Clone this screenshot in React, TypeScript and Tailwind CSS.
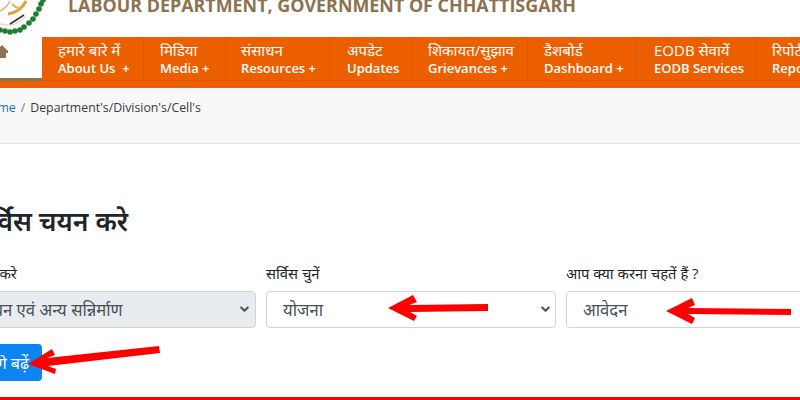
const font = { fontFamily: '"Open Sans","Noto Sans","Noto Sans Devanagari",sans-serif' };

const menu = [
  { hi: "हमारे बारे में", en: "About Us  +", w: "w-[102px]", pl: "pl-[16px]" },
  { hi: "मिडिया", en: "Media +", w: "w-[82px]", pl: "pl-[16px]" },
  { hi: "संसाधन", en: "Resources +", w: "w-[104px]", pl: "pl-[15px]" },
  { hi: "अपडेट", en: "Updates", w: "w-[82px]", pl: "pl-[17px]" },
  { hi: "शिकायत/सुझाव", en: "Grievances +", w: "w-[116px]", pl: "pl-[16px]" },
  { hi: "डैशबोर्ड", en: "Dashboard +", w: "w-[109px]", pl: "pl-[16px]" },
  { hi: "EODB सेवायें", en: "EODB Services", w: "w-[119px]", pl: "pl-[17px]" },
  { hi: "रिपोर्ट", en: "Reports +", w: "w-[100px]", pl: "pl-[16px]" },
];

const beads = [
  [0, 30], [5, 31], [10, 32], [15, 31], [20, 30], [24, 27], [29, 23], [33, 19], [36, 14], [39, 9], [41, 4], [43, 0],
];

function Chevron() {
  return (
    <svg width="9" height="7" viewBox="0 0 9 7" className="shrink-0">
      <path d="M1.2 1.5 4.5 4.8l3.3-3.3" fill="none" stroke="#4b5157" strokeWidth="2" strokeLinecap="round" strokeLinejoin="round" />
    </svg>
  );
}

export default function App() {
  return (
    <div style={font} className="relative w-[800px] h-[400px] overflow-hidden bg-white">
      <header className="h-[37px] relative">
        <svg className="absolute left-0 top-0" width="50" height="37" viewBox="0 0 50 37">
          {beads.map(([x, y]) => (
            <circle key={`${x}-${y}`} cx={x} cy={y} r="2.8" fill="#1d7f2c" />
          ))}
          <path d="M-2 23 C8 27 18 25 26 16" fill="none" stroke="#e3ddd0" strokeWidth="1.5" />
          <path d="M8 14 C15 13 22 9 26 1" fill="none" stroke="#d9a441" strokeWidth="3" />
          <path d="M12 4 C14 6 17 8 20 8" fill="none" stroke="#e0b45a" strokeWidth="2" />
          <path d="M10 24 L24 15" stroke="#333" strokeWidth="1.5" />
          <path d="M0 11 C4 9 8 6 10 1" fill="none" stroke="#d9b56a" strokeWidth="1.5" />
        </svg>
        <div className="absolute left-[68px] top-[-5px] text-[17.9px] leading-[20px] font-bold text-[#8d7250] whitespace-nowrap">
          LABOUR DEPARTMENT, GOVERNMENT OF CHHATTISGARH
        </div>
      </header>

      <nav className="h-[51px] bg-[#ec5f00] flex items-start">
        <div className="w-[42px] h-[44px] bg-white border-b-[3px] border-[#8d7250] shrink-0 relative">
          <svg className="absolute left-0 top-[8px]" width="9" height="14" viewBox="0 0 9 14">
            <path d="M-5 7 2 0l6 6v2H6v5H-3V8z" fill="#8d7250" />
          </svg>
        </div>
        <div className="flex">
          {menu.map((m) => (
            <div key={m.en} className={`${m.w} ${m.pl} h-[44px] shrink-0 border-r border-b border-[#d95700] pt-[4px] text-white text-[13px] leading-[18px] font-semibold whitespace-pre`}>
              <div className="font-normal text-[15px] leading-[18px]">{m.hi}</div>
              <div>{m.en}</div>
            </div>
          ))}
        </div>
      </nav>

      <div className="h-[56px] bg-[#f8f8f8] border-b border-[#e5e5e5] flex items-start pt-[10px] text-[12.3px] leading-[20px] whitespace-nowrap -ml-[19px]">
        <span className="text-[#1a6fb5]">Home</span>
        <span className="text-[#6c757d] mx-[5px]">/</span>
        <span className="text-[#343a40]">Department's/Division's/Cell's</span>
      </div>

      <h1 className="mt-[59px] -ml-[29px] text-[26.5px] leading-[36px] font-semibold text-[#212529] whitespace-nowrap">सर्विस चयन करे</h1>

      <div className="mt-[24px] flex gap-[10px] -ml-[44px]">
        <div className="w-[300px] shrink-0">
          <div className="h-[21px] -ml-[22px] text-[14.8px] leading-[20px] text-[#212529] whitespace-nowrap">सेक्टर चयन करे</div>
          <div className="mt-[7px] h-[37px] rounded-[4px] border border-[#ced4da] bg-[#e9ecef] flex items-center justify-between pr-[6px] pl-[25px] text-[16.7px] text-[#495057] whitespace-nowrap">
            <span>भवन एवं अन्य सन्निर्माण</span>
            <Chevron />
          </div>
        </div>
        <div className="w-[290px] shrink-0">
          <div className="h-[21px] text-[14.8px] leading-[20px] text-[#212529] whitespace-nowrap">सर्विस चुनें</div>
          <div className="mt-[7px] h-[37px] rounded-[4px] border border-[#ced4da] bg-white flex items-center justify-between pr-[5px] pl-[16px] text-[16.7px] text-[#495057] whitespace-nowrap">
            <span>योजना</span>
            <Chevron />
          </div>
        </div>
        <div className="w-[290px] shrink-0">
          <div className="h-[21px] text-[14.8px] leading-[20px] text-[#212529] whitespace-nowrap">आप क्या करना चहतें हैं ?</div>
          <div className="mt-[7px] h-[37px] rounded-[4px] border border-[#ced4da] bg-white flex items-center pl-[16px] text-[16.7px] text-[#495057] whitespace-nowrap">
            <span>आवेदन</span>
          </div>
        </div>
      </div>

      <div className="mt-[16px] w-[42px] h-[37px] bg-[#0d84f0] rounded-r-[4px] flex items-center justify-end pr-[13px] text-white text-[16px] whitespace-nowrap">
        <span>आगे बढ़ें</span>
      </div>

      <div className="mt-[16px] h-[3px] bg-[#ff0000]" />

      <svg className="absolute left-0 top-0 pointer-events-none" width="800" height="400" viewBox="0 0 800 400">
        <polygon fill="#ff0000" points="388,308 413,295 417,302 409,305 488,304 488,311 410,312 417,316 414,321" />
        <polygon fill="#ff0000" points="666,311 692,298 695,305 688,308 791,309 791,315 688,314 695,318 692,324" />
        <polygon fill="#ff0000" points="28,364 52,349 55,355 47,358 159,346 160,353 48,366 56,369 55,374" />
      </svg>
    </div>
  );
}
